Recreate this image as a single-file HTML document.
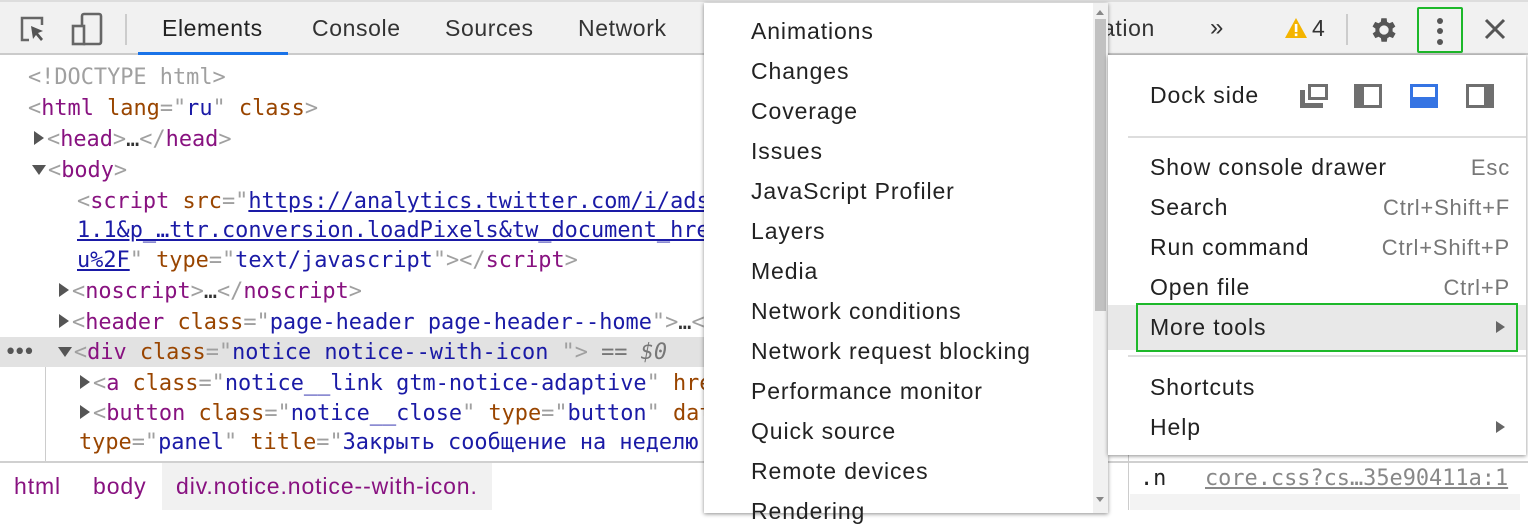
<!DOCTYPE html>
<html><head><meta charset="utf-8"><style>
*{margin:0;padding:0;box-sizing:border-box}
body{width:1528px;height:510px;overflow:hidden;background:#fff;position:relative;font-family:"Liberation Sans","DejaVu Sans",sans-serif;}
.abs{position:absolute}
#tb{left:0;top:0;width:1528px;height:55px;background:#f1f1f1;border-bottom:2px solid #cbcbcb;border-top:2px solid #ddd}
.tab{position:absolute;top:13px;font-size:23px;letter-spacing:0.6px;color:#333}
.code{position:absolute;left:0;font-family:"DejaVu Sans Mono","Liberation Mono",monospace;font-size:21.9px;white-space:pre;color:#881280;line-height:30px}
.g{color:#a0a0a0}.t{color:#881280}.a{color:#994500}.v{color:#1a1aa6}.u{color:#1a1aa6;text-decoration:underline}
.tri{display:inline-block;width:0;height:0;border-left:10px solid #555;border-top:7px solid transparent;border-bottom:7px solid transparent;margin-right:3px;vertical-align:1px}
.trd{display:inline-block;width:0;height:0;border-top:10px solid #555;border-left:7px solid transparent;border-right:7px solid transparent;margin-right:2px;vertical-align:2px}
.menu{position:absolute;background:#fff;box-shadow:0 1px 4px rgba(0,0,0,.45)}
.mi{position:absolute;font-size:23px;letter-spacing:0.9px;color:#222;white-space:nowrap}
.sc{position:absolute;right:16px;font-size:22px;letter-spacing:0.8px;color:#777}
.bc{position:absolute;top:473px;font-size:23px;letter-spacing:0.9px;color:#881280}
</style></head><body>
<div id="tb" class="abs">
<svg class="abs" style="left:18px;top:12px" width="32" height="32" viewBox="0 0 32 32"><path d="M11 26H4V4h20v7" fill="none" stroke="#666" stroke-width="2.5"/><path d="M13 12l12 5-5 2 5 6-2 2-5-6-3 4z" fill="#555"/></svg>
<svg class="abs" style="left:70px;top:10px" width="34" height="36" viewBox="0 0 34 36"><rect x="12" y="2" width="19" height="30" rx="2" fill="none" stroke="#666" stroke-width="2.6"/><rect x="3" y="14" width="11" height="18" fill="#f1f1f1" stroke="#666" stroke-width="2.6"/></svg>
<div class="abs" style="left:125px;top:12px;width:2px;height:31px;background:#ccc"></div>
<div class="tab" style="left:162px;color:#222">Elements</div>
<div class="abs" style="left:138px;top:50px;width:150px;height:3px;background:#1a73e8"></div>
<div class="tab" style="left:312px">Console</div>
<div class="tab" style="left:445px">Sources</div>
<div class="tab" style="left:578px">Network</div>
<div class="tab" style="left:1095px">tation</div>
<div class="tab" style="left:1210px;font-size:24px;top:12px">»</div>
<svg class="abs" style="left:1284px;top:15px" width="24" height="22" viewBox="0 0 24 22"><path d="M12 1L23 21H1z" fill="#f4b400"/><rect x="10.8" y="7" width="2.6" height="8" fill="#fff"/><rect x="10.8" y="16.5" width="2.6" height="2.6" fill="#fff"/></svg>
<div class="tab" style="left:1312px">4</div>
<div class="abs" style="left:1346px;top:12px;width:2px;height:31px;background:#ccc"></div>
<svg class="abs" style="left:1368px;top:12px" width="32" height="32" viewBox="0 0 24 24"><path fill="#555" d="M19.4 13a7.5 7.5 0 000-2l2.1-1.6-2-3.5-2.5 1a7.3 7.3 0 00-1.7-1L15 3.2h-4l-.4 2.7a7.3 7.3 0 00-1.7 1l-2.5-1-2 3.5L6.6 11a7.5 7.5 0 000 2l-2.1 1.6 2 3.5 2.5-1a7.3 7.3 0 001.7 1l.4 2.7h4l.4-2.7a7.3 7.3 0 001.7-1l2.5 1 2-3.5zM13 15.5a3.5 3.5 0 110-7 3.5 3.5 0 010 7z" transform="translate(-1 0)"/></svg>
<div class="abs" style="left:1417px;top:5px;width:46px;height:46px;border:2px solid #1db82a;border-radius:2px"></div>
<div class="abs" style="left:1437px;top:16px;width:6px;height:6px;border-radius:3px;background:#555"></div>
<div class="abs" style="left:1437px;top:26px;width:6px;height:6px;border-radius:3px;background:#555"></div>
<div class="abs" style="left:1437px;top:37px;width:6px;height:6px;border-radius:3px;background:#555"></div>
<svg class="abs" style="left:1484px;top:16px" width="22" height="22" viewBox="0 0 22 22"><path d="M2 2L20 20M20 2L2 20" stroke="#555" stroke-width="3"/></svg>
</div>

<div class="abs" style="left:0;top:337px;width:720px;height:30px;background:#e2e2e2"></div>
<div class="abs" style="left:45px;top:367px;width:1px;height:94px;background:#ccc"></div>
<div class="code" style="top:63px;left:28px"><span class="g">&lt;!DOCTYPE html&gt;</span></div>
<div class="code" style="top:94px;left:28px"><span class="g">&lt;</span>html <span class="a">lang</span><span class="g">="</span><span class="v">ru</span><span class="g">"</span> <span class="a">class</span><span class="g">&gt;</span></div>
<div class="code" style="top:125px;left:34px"><span class="tri"></span><span class="g">&lt;</span>head<span class="g">&gt;</span><span style="color:#333">…</span><span class="g">&lt;/</span>head<span class="g">&gt;</span></div>
<div class="code" style="top:156px;left:32px"><span class="trd"></span><span class="g">&lt;</span>body<span class="g">&gt;</span></div>
<div class="code" style="top:187px;left:77px"><span class="g">&lt;</span>script <span class="a">src</span><span class="g">="</span><span class="u">https://analytics.twitter.com/i/adsct?</span></div>
<div class="code" style="top:216px;left:77px"><span class="u">1.1&amp;p_…ttr.conversion.loadPixels&amp;tw_document_href</span></div>
<div class="code" style="top:246px;left:77px"><span class="u">u%2F</span><span class="g">"</span> <span class="a">type</span><span class="g">="</span><span class="v">text/javascript</span><span class="g">"&gt;&lt;/</span>script<span class="g">&gt;</span></div>
<div class="code" style="top:277px;left:59px"><span class="tri"></span><span class="g">&lt;</span>noscript<span class="g">&gt;</span><span style="color:#333">…</span><span class="g">&lt;/</span>noscript<span class="g">&gt;</span></div>
<div class="code" style="top:308px;left:59px"><span class="tri"></span><span class="g">&lt;</span>header <span class="a">class</span><span class="g">="</span><span class="v">page-header page-header--home</span><span class="g">"&gt;</span><span style="color:#333">…</span><span class="g">&lt;/</span></div>
<div class="code" style="top:338px;left:4px"><span style="color:#555;letter-spacing:-4px">•••</span>  <span class="trd"></span><span class="g">&lt;</span>div <span class="a">class</span><span class="g">="</span><span class="v">notice notice--with-icon </span><span class="g">"&gt;</span> <span class="g" style="font-style:italic;color:#777">== $0</span></div>
<div class="code" style="top:369px;left:80px"><span class="tri"></span><span class="g">&lt;</span>a <span class="a">class</span><span class="g">="</span><span class="v">notice__link gtm-notice-adaptive</span><span class="g">"</span> <span class="a">href</span></div>
<div class="code" style="top:399px;left:80px"><span class="tri"></span><span class="g">&lt;</span>button <span class="a">class</span><span class="g">="</span><span class="v">notice__close</span><span class="g">"</span> <span class="a">type</span><span class="g">="</span><span class="v">button</span><span class="g">"</span> <span class="a">data</span></div>
<div class="code" style="top:428px;left:79px"><span class="a">type</span><span class="g">="</span><span class="v">panel</span><span class="g">"</span> <span class="a">title</span><span class="g">="</span><span class="v">Закрыть сообщение на неделю</span></div>

<div class="abs" style="left:0;top:461px;width:1528px;height:2px;background:#d0d0d0"></div>
<div class="abs" style="left:162px;top:463px;width:330px;height:47px;background:#f1f1f1"></div>
<div class="bc" style="left:14px">html</div>
<div class="bc" style="left:93px">body</div>
<div class="bc" style="left:176px">div.notice.notice--with-icon.</div>
<div class="abs" style="left:1128px;top:455px;width:1px;height:55px;background:#ccc"></div>
<div class="code abs" style="left:1140px;top:464px;color:#222">.n</div>
<div class="code abs" style="left:1205px;top:464px;color:#888;text-decoration:underline">core.css?cs…35e90411a:1</div>
<div class="abs" style="left:1130px;top:494px;width:390px;height:16px;background:#f3f3f3"></div>

<div class="menu" style="left:704px;top:3px;width:404px;height:510px">
<div class="abs" style="left:389px;top:0;width:15px;height:510px;background:#f1f1f1"></div>
<div class="abs" style="left:391px;top:16px;width:11px;height:292px;background:#c1c1c1"></div>
<div class="abs" style="left:392px;top:7px;border-bottom:5px solid #888;border-left:4px solid transparent;border-right:4px solid transparent"></div>
<div class="abs" style="left:392px;top:494px;border-top:5px solid #888;border-left:4px solid transparent;border-right:4px solid transparent"></div>
<div class="mi" style="left:47px;top:15px">Animations</div>
<div class="mi" style="left:47px;top:55px">Changes</div>
<div class="mi" style="left:47px;top:95px">Coverage</div>
<div class="mi" style="left:47px;top:135px">Issues</div>
<div class="mi" style="left:47px;top:175px">JavaScript Profiler</div>
<div class="mi" style="left:47px;top:215px">Layers</div>
<div class="mi" style="left:47px;top:255px">Media</div>
<div class="mi" style="left:47px;top:295px">Network conditions</div>
<div class="mi" style="left:47px;top:335px">Network request blocking</div>
<div class="mi" style="left:47px;top:375px">Performance monitor</div>
<div class="mi" style="left:47px;top:415px">Quick source</div>
<div class="mi" style="left:47px;top:455px">Remote devices</div>
<div class="mi" style="left:47px;top:495px">Rendering</div>
</div>

<div class="menu" style="left:1108px;top:55px;width:418px;height:400px">
<div class="mi" style="left:42px;top:27px">Dock side</div>
<svg class="abs" style="left:192px;top:29px" width="200" height="24" viewBox="0 0 200 24">
<path d="M8 0h20v16H8z M11 3v10h14V3z" fill="#6f6f6f" fill-rule="evenodd"/><path d="M0 6h5v13h18v5H0z" fill="#6f6f6f"/>
<path d="M54 0h28v24H54z M64 3v18h15V3z" fill="#6f6f6f" fill-rule="evenodd"/>
<path d="M110 0h28v24H110z M113 3v10h22V3z" fill="#3574e3" fill-rule="evenodd"/>
<path d="M166 0h28v24H166z M169 3v18h15V3z" fill="#6f6f6f" fill-rule="evenodd"/>
</svg>
<div class="abs" style="left:20px;top:81px;width:398px;height:2px;background:#ddd"></div>
<div class="mi" style="left:42px;top:99px">Show console drawer</div><div class="sc" style="top:100px">Esc</div>
<div class="mi" style="left:42px;top:139px">Search</div><div class="sc" style="top:140px">Ctrl+Shift+F</div>
<div class="mi" style="left:42px;top:179px">Run command</div><div class="sc" style="top:180px">Ctrl+Shift+P</div>
<div class="mi" style="left:42px;top:219px">Open file</div><div class="sc" style="top:220px">Ctrl+P</div>
<div class="abs" style="left:0;top:250px;width:418px;height:45px;background:#e8e8e8"></div>
<div class="abs" style="left:28px;top:248px;width:382px;height:49px;border:2px solid #1db82a"></div>
<div class="mi" style="left:42px;top:259px">More tools</div>
<div class="abs" style="left:388px;top:266px;border-left:9px solid #666;border-top:6px solid transparent;border-bottom:6px solid transparent"></div>
<div class="abs" style="left:20px;top:300px;width:398px;height:2px;background:#ddd"></div>
<div class="mi" style="left:42px;top:319px">Shortcuts</div>
<div class="mi" style="left:42px;top:359px">Help</div>
<div class="abs" style="left:388px;top:366px;border-left:9px solid #666;border-top:6px solid transparent;border-bottom:6px solid transparent"></div>
</div>
</body></html>
